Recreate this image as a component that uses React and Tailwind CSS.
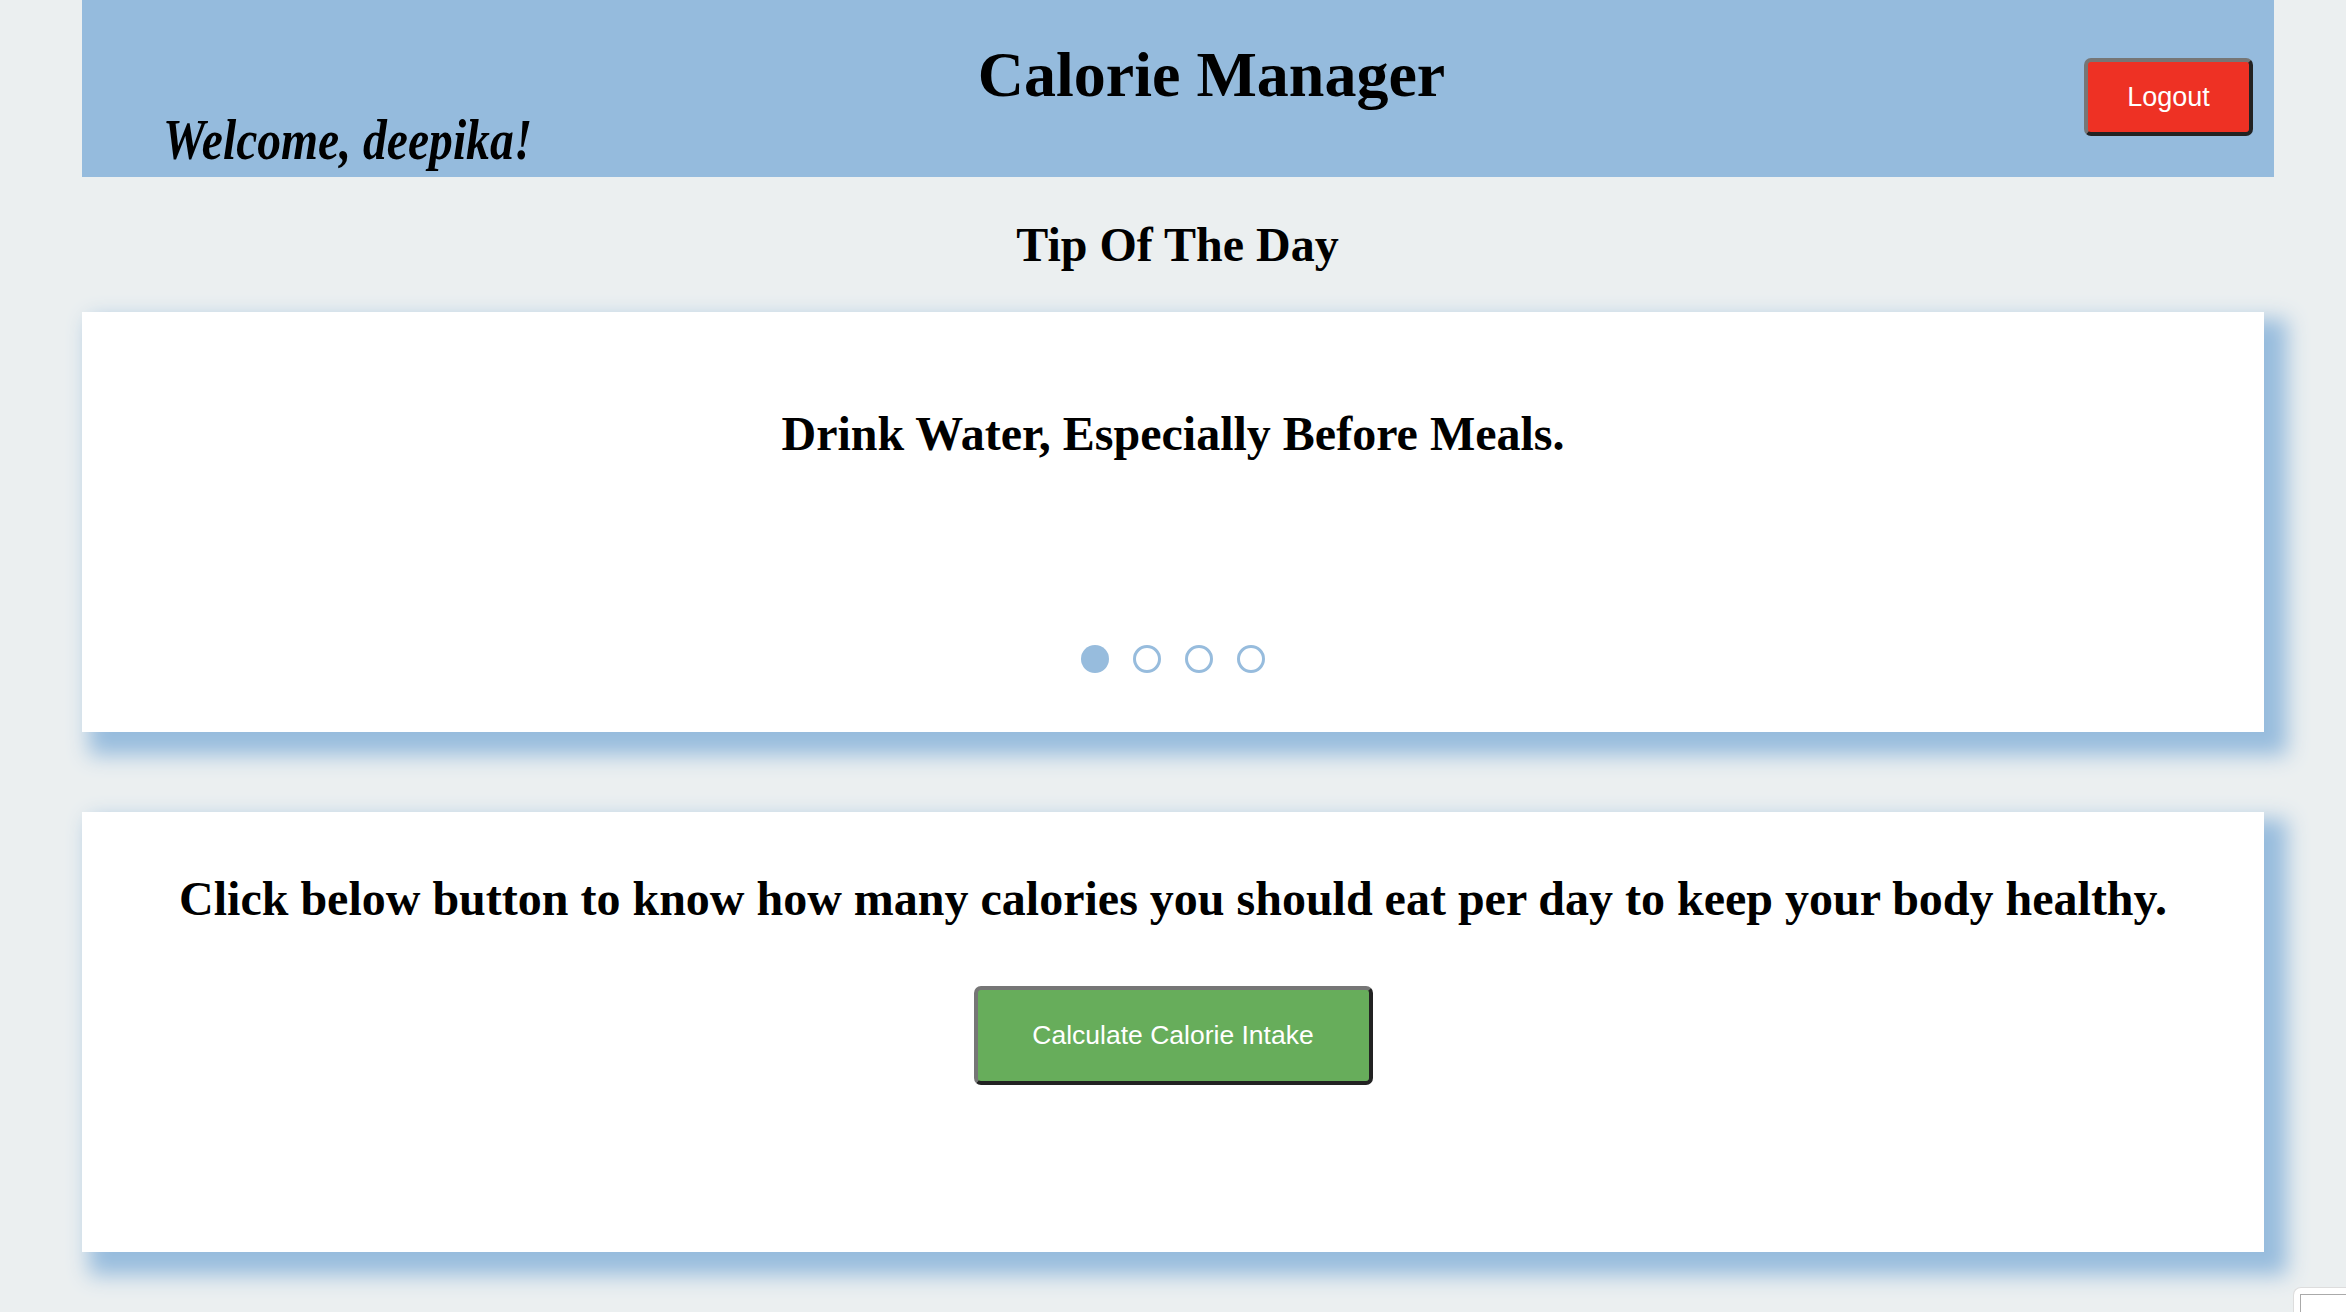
import React, { useState } from 'react';

const tips = [
    'Drink Water, Especially Before Meals.',
    'Eat Plenty Of Fruits And Vegetables.',
    'Get Enough Good Quality Sleep.',
    'Avoid Sugary Drinks And Fruit Juices.',
];

const serif = "font-['Liberation_Serif','Times_New_Roman',serif]";
const sans = "font-['Liberation_Sans',Arial,sans-serif]";

const App = () => {
    const [tipIndex, setTipIndex] = useState(0);

    return (
        <div className={`min-h-screen bg-[#ebeff0] ${serif} text-black`}>
            <header className="ml-[82px] w-[2192px] h-[177px] bg-[#95bbdd] flex">
                <div className="flex-1 flex flex-col">
                    <h1 className="mt-[43px] pl-[257px] text-center text-[64px] leading-[64px] font-bold">
                        Calorie Manager
                    </h1>
                    <h3 className="mt-[5px] ml-[81px] text-[56px] leading-[56px] font-bold italic origin-left scale-x-[0.85] whitespace-nowrap">
                        Welcome, deepika!
                    </h3>
                </div>
                <button
                    className={`mt-[58px] mr-[21px] w-[169px] h-[78px] self-start rounded-[7px] border-[4px] border-t-[#767676] border-l-[#767676] border-b-[#222222] border-r-[#222222] bg-[#ee3124] text-white text-[27px] ${sans}`}
                >
                    Logout
                </button>
            </header>

            <h2 className="mt-[44px] pl-[9px] text-center text-[48px] leading-[48px] font-bold">
                Tip Of The Day
            </h2>

            <div className="mt-[43px] ml-[82px] w-[2182px] h-[420px] bg-white shadow-[15px_15px_20px_8px_#97bcdd] flex flex-col items-center pt-[98px]">
                <p className="text-[48px] leading-[48px] font-bold">{tips[tipIndex]}</p>
                <div className="mt-[187px] flex gap-[24px]">
                    {tips.map((tip, i) => (
                        <button
                            key={i}
                            onClick={() => setTipIndex(i)}
                            className={
                                i === tipIndex
                                    ? 'w-[28px] h-[28px] rounded-full bg-[#97bcdd]'
                                    : 'w-[28px] h-[28px] rounded-full border-[3px] border-[#97bcdd] bg-white'
                            }
                        />
                    ))}
                </div>
            </div>

            <div className="mt-[80px] ml-[82px] w-[2182px] h-[440px] bg-white shadow-[15px_15px_20px_8px_#97bcdd] flex flex-col items-center pt-[63px]">
                <p className="text-[48px] leading-[48px] font-bold whitespace-nowrap">
                    Click below button to know how many calories you should eat per day to keep your body healthy.
                </p>
                <button
                    className={`mt-[63px] w-[399px] h-[99px] rounded-[7px] border-[4px] border-t-[#767676] border-l-[#767676] border-b-[#222222] border-r-[#222222] bg-[#67ad5b] text-white text-[26.5px] ${sans}`}
                >
                    Calculate Calorie Intake
                </button>
            </div>

            <div className="fixed right-0 bottom-0 w-[53px] h-[25px] bg-white rounded-tl-[8px] border-t border-l border-[#dddddd] pl-[6px] pt-[6px]">
                <div className="w-full h-full border-t border-l border-[#aaaaaa] bg-white" />
            </div>
        </div>
    );
};

export default App;
